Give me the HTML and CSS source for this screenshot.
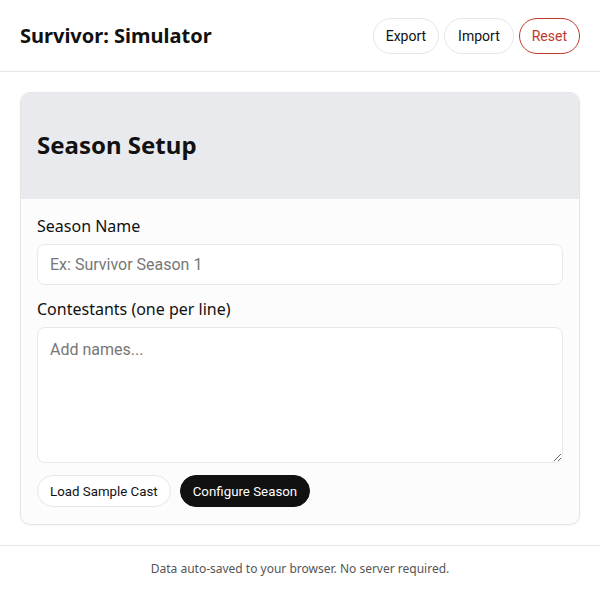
FILE: index.html
```html
<!DOCTYPE html>
<html lang="en">
<head>
<meta charset="utf-8">
<title>Survivor: Simulator</title>
<link rel="stylesheet" href="styles.css">
</head>
<body>
<header class="topbar">
  <h1 class="brand">Survivor: Simulator</h1>
  <nav class="actions">
    <button class="pill">Export</button>
    <button class="pill pill-wide">Import</button>
    <button class="pill pill-danger">Reset</button>
  </nav>
</header>
<main class="main">
  <section class="card">
    <div class="card-head">
      <h2 class="card-title">Season Setup</h2>
    </div>
    <div class="card-body">
      <label class="field-label" for="sname">Season Name</label>
      <input id="sname" class="field-input" type="text" placeholder="Ex: Survivor Season 1">
      <label class="field-label" for="cast">Contestants (one per line)</label>
      <textarea id="cast" class="field-area" placeholder="Add names..."></textarea>
      <div class="btn-row">
        <button class="pill pill-sm">Load Sample Cast</button>
        <button class="pill pill-sm pill-dark">Configure Season</button>
      </div>
    </div>
  </section>
</main>
<footer class="footer">Data auto-saved to your browser. No server required.</footer>
</body>
</html>
```
FILE: styles.css
```css
* { box-sizing: border-box; }
html, body { margin: 0; padding: 0; background: #ffffff; }
body { font-family: "Noto Sans", "Open Sans", sans-serif; color: #111; }

.topbar {
  height: 72px;
  display: flex;
  align-items: center;
  justify-content: space-between;
  padding: 0 20px;
  border-bottom: 1px solid #e6e6e6;
}
.brand { margin: 0; font-size: 20px; font-weight: 700; color: #111; }
.actions { display: flex; gap: 5px; }

.pill {
  font-family: Roboto, sans-serif;
  font-size: 14px;
  height: 36px;
  padding: 0 12px;
  background: #fff;
  color: #111;
  border: 1px solid #e6e6e6;
  border-radius: 18px;
  cursor: pointer;
}
.pill-wide { padding: 0 13px; }
.pill-danger { border-color: #c0392b; color: #c0392b; }
.pill-sm { height: 32px; font-size: 13.3px; padding: 0 12px; border-radius: 16px; }
.pill-dark { background: #111; color: #fff; border-color: #111; }

.main { padding: 20px; }
.card {
  background: #fcfcfc;
  border: 1px solid #e6e6e6;
  border-radius: 10px;
  overflow: hidden;
  box-shadow: 0 1px 3px rgba(0,0,0,0.04);
}
.card-head {
  background: #e9eaee;
  height: 106px;
  display: flex;
  align-items: center;
  padding: 0 16px 3px;
}
.card-title { margin: 0; font-size: 24px; font-weight: 700; color: #111; }
.card-body { padding: 16px 16px 17px; display: flex; flex-direction: column; }
.field-label { font-size: 16px; color: #111; margin-bottom: 7px; line-height: 22px; }
.field-input {
  height: 41px;
  border: 1px solid #e8e8e8;
  border-radius: 8px;
  background: #fff;
  padding: 0 12px;
  font-family: Roboto, sans-serif;
  font-size: 16px;
  margin-bottom: 13px;
}
.field-area {
  height: 136px;
  border: 1px solid #e8e8e8;
  border-radius: 8px;
  background: #fff;
  padding: 12px;
  font-family: Roboto, sans-serif;
  font-size: 16px;
  resize: vertical;
  margin-bottom: 12px;
}
.field-input::placeholder, .field-area::placeholder { color: #777; }
.btn-row { display: flex; gap: 9px; }

.footer {
  border-top: 1px solid #e6e6e6;
  padding: 14px 0;
  text-align: center;
  font-size: 12px;
  color: #555;
}
```
